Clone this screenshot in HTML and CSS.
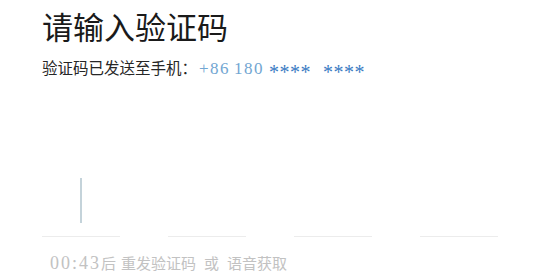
FILE: index.html
```html
<!DOCTYPE html>
<html lang="zh-CN">
<head>
    <meta charset="UTF-8">
    <meta name="viewport" content="width=device-width, initial-scale=1.0">
    <title>请输入验证码</title>
    <link rel="stylesheet" href="styles.css">
</head>
<body>
    <div class="page">
        <h1 class="title">请输入验证码</h1>
        <p class="sent">验证码已发送至手机：<span class="num light">+86</span><span class="num light gap">180</span><span class="stars">****</span><span class="stars">****</span></p>

        <div class="code">
            <div class="cell active"><span class="cursor"></span></div>
            <div class="cell"></div>
            <div class="cell"></div>
            <div class="cell"></div>
        </div>

        <p class="resend"><span class="num">00:43</span>后<span class="sp">重发验证码</span><span class="sp wide">或</span><span class="sp wide">语音获取</span></p>
    </div>
</body>
</html>
```

FILE: styles.css
```css
body { margin: 0; padding: 0; background-color: #fff; font-family: "Noto Sans CJK SC", sans-serif; }
.page { padding: 8px 0 0 42px; }
.title { margin: 0; font-size: 31px; line-height: 36px; font-weight: normal; color: #1a1a1a; }
.sent { margin: 13px 0 0; font-size: 15.5px; line-height: 20px; color: #262626; white-space: nowrap; }
.num { font-family: "Liberation Serif", serif; font-size: 17px; }
.light { color: #72a6d2; letter-spacing: 1.5px; margin-left: 2px; }
.gap { margin-left: 4px; }
.stars { display: inline-block; position: relative; top: 5px; font-family: "Liberation Serif", serif; font-size: 20px; line-height: 20px; color: #3a7bc3; letter-spacing: 0.5px; margin-left: 5px; }
.stars + .stars { margin-left: 12px; }
.code { display: flex; gap: 48px; margin-top: 92px; }
.cell { width: 78px; height: 66px; border-bottom: 1px solid #ececec; display: flex; justify-content: center; padding-top: 7px; box-sizing: border-box; }
.cursor { width: 1.5px; height: 45px; background-color: #c4d3da; }
.resend { margin: 16px 0 0 8px; font-size: 15px; line-height: 20px; color: #c2c2c2; white-space: nowrap; }
.resend .num { font-size: 18px; letter-spacing: 2px; }
.sp { margin-left: 5px; }
.sp.wide { margin-left: 8px; }
```
